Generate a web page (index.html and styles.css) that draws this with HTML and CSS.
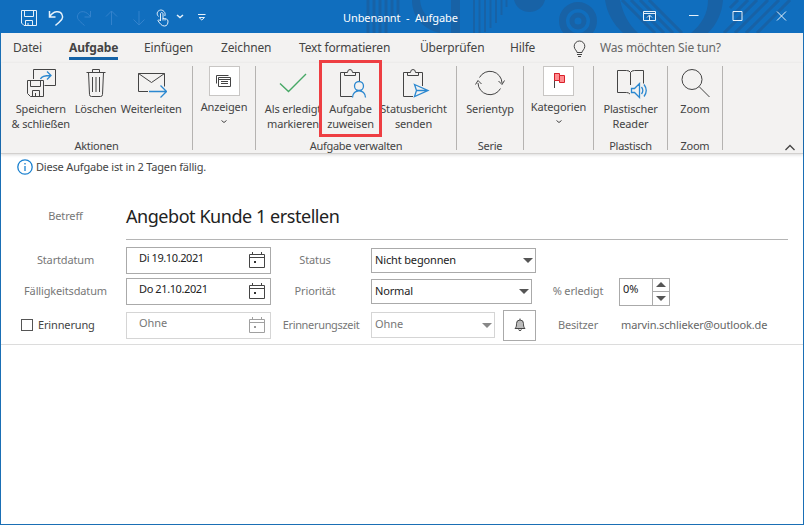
FILE: index.html
```html
<!DOCTYPE html>
<html lang="de">
<head>
    <meta charset="UTF-8">
    <meta name="viewport" content="width=device-width, initial-scale=1.0">
    <title>Unbenannt - Aufgabe</title>
    <link rel="stylesheet" href="styles.css">
</head>
<body>
    <div class="window">
        <header class="titlebar">
            <!-- Decorative pattern -->
            <svg class="pattern" width="444" height="33" viewBox="360 0 444 33">
                <path stroke-width="3" d="M368 0v33M374 0v33M380 0v33M386 0v33M392 0v21M398 0v19"/>
                <path class="solid" d="M412 0h8c1 12 8 20 20 23v10c-17-4-28-16-28-33zM451 0h9v33h-9zM514 0h31c-4 16-27 16-31 0z"/>
                <path stroke-width="2" d="M474 0v33M479.500 0v33M485 0v32M490.500 0v28M496 0v23M501.500 0v15M506.500 0v7"/>
                <circle cx="578" cy="21" r="15.500" stroke-width="7"/>
                <circle cx="578" cy="21" r="6" stroke-width="5"/>
                <path class="solid" d="M605 0h15c3 14 9 25 18 33h-15c-10-9-16-20-18-33zM708 0h15c-1 13-6 24-15 33h-17c11-9 17-20 17-33z"/>
                <path stroke-width="3" d="M622 0l33 33M631 0l33 33M640 0l33 33M649 0l33 33M730 8l8-8M733 15l15-15M724 33l33-33M735 33l33-33M746 33l33-33M757 33l33-33"/>
            </svg>
            <div class="quick">
                <svg width="28" height="18" viewBox="0 0 28 18"><path d="M7.500 1.500h15v15h-12.500l-2.500-2.500zM10.500 1.500v6h9v-6M11.500 16.500v-5h7v5M14 16v-2"/></svg>
                <svg width="28" height="18" viewBox="0 0 28 18" class="bold"><path d="M7.500 2v6h6M7.800 7.500C11 2 18 1 20 5.500c2 4-1 6-6.500 11"/></svg>
                <svg width="28" height="18" viewBox="0 0 28 18" class="dim"><path d="M20.500 2v6h-6M20.200 7.500C17 2 10 1 8 5.500c-2 4 1 6 6.500 11"/></svg>
                <svg width="28" height="18" viewBox="0 0 28 18" class="dim"><path d="M13.500 2v14M8 7.500L13.500 2 19 7.500"/></svg>
                <svg width="28" height="18" viewBox="0 0 28 18" class="dim"><path d="M13 2v14M7.500 10.500L13 16l5.500-5.500"/></svg>
                <svg width="18" height="18" viewBox="0 0 18 18"><path d="M6.500 12V5c0-2 2.500-2 2.500 0v4.500c2 0 5 .5 5 2.500 0 3-1 5-3.500 5-3 0-4-2-6.500-5.200 0-1.300 1.500-1.300 2.500.2M11 9.500v2M9 9v2.500M4.500 7.500c-4-4 2-9 5.500-5 1.300 1.300 1.300 3 .8 4.500"/></svg>
                <svg width="16" height="18" viewBox="0 0 16 18" class="bold"><path d="M5 6l3 2.500 3-2.500"/></svg>
                <svg width="28" height="18" viewBox="0 0 28 18"><path d="M10 5.500h7.500M11 8.500h5.500l-2.700 2.500z"/></svg>
            </div>
            <div class="caption">Unbenannt&nbsp; -&nbsp; Aufgabe</div>
            <div class="controls">
                <svg width="44" height="18" viewBox="0 0 44 18"><path d="M15.500 4.500h12v9h-12zM15.500 6.500h12M21.500 13V8.500M19 10.500l2.500-2.500 2.500 2.500"/></svg>
                <svg width="44" height="18" viewBox="0 0 44 18"><path d="M17 8.500h9.500"/></svg>
                <svg width="44" height="18" viewBox="0 0 44 18"><path d="M17 4.500h9v9h-9z"/></svg>
                <svg width="44" height="18" viewBox="0 0 44 18"><path d="M17 4.500l9 9M26 4.500l-9 9"/></svg>
            </div>
        </header>

        <nav class="tabs">
            <a class="tab">Datei</a>
            <a class="tab active">Aufgabe</a>
            <a class="tab">Einfügen</a>
            <a class="tab">Zeichnen</a>
            <a class="tab">Text formatieren</a>
            <a class="tab">Überprüfen</a>
            <a class="tab">Hilfe</a>
            <svg width="14" height="18" viewBox="0 0 14 18"><path d="M4 12.500c0-2-2.800-3-2.800-6.200a5.300 5.300 0 0 1 10.600 0c0 3.200-2.800 4.200-2.800 6.200zM4 14.500h5M5 16.500h3"/></svg>
            <a class="tab search">Was möchten Sie tun?</a>
        </nav>

        <section class="ribbon">
            <div class="group actions">
                <div class="tools">
                    <div class="tool save">
                        <svg width="32" height="32" viewBox="0 0 32 32"><path d="M8.500 12V2.500h22v16h-11M2.500 13.500h16v16h-13l-3-3zM5.500 13.500v6h10v-6M7.500 29.500v-6h7v6M10.500 29v-3"/><path class="blue" d="M15.500 12c1-3 4-3.500 10-3.500M22 4.500l4 4-4 4"/></svg>
                        <span>Speichern<br>&amp; schließen</span>
                    </div>
                    <div class="tool delete">
                        <svg width="32" height="32" viewBox="0 0 32 32"><path d="M6.500 5.500h19M12.500 5V2.500h7V5M8.500 5.500l1 22q0 2 2 2h9q2 0 2-2l1-22M12.500 10v15M16 10v15M19.500 10v15"/></svg>
                        <span>Löschen</span>
                    </div>
                    <div class="tool forward">
                        <svg width="32" height="32" viewBox="0 0 32 32"><path d="M13 24.500H3.500v-18h26v13M3.500 6.500l13 9 13-9"/><path class="blue" d="M14 24.500h17M25.500 18.500l6 6-6 6"/></svg>
                        <span>Weiterleiten</span>
                    </div>
                </div>
                <div class="name">Aktionen</div>
            </div>
            <div class="group show">
                <div class="tool boxed">
                    <div class="box"><svg width="28" height="28" viewBox="0 0 28 28"><path d="M6.500 16.500v-8h12M8.500 11v-.5h12v9h-12zM8.500 12.500h12M11 14.500h7M11 16.500h7"/></svg></div>
                    <span>Anzeigen</span>
                    <svg class="chevron" width="8" height="6" viewBox="0 0 8 6"><path d="M1.500 1.500l2.500 2 2.500-2"/></svg>
                </div>
            </div>
            <div class="group manage">
                <div class="tools">
                    <div class="tool done">
                        <svg width="32" height="32" viewBox="0 0 32 32"><path class="green" d="M3 16.500l8.500 8L29 7"/></svg>
                        <span>Als erledigt<br>markieren</span>
                    </div>
                    <div class="tool assign">
                        <svg width="32" height="32" viewBox="0 0 32 32"><path d="M11 5.500H5.500v24H17M19 5.500h5.500V14M9.500 8.500v-3h3q0-3 2.500-3t2.500 3h3v3z"/><path class="blue" d="M19.500 19a4.500 4.500 0 1 1 9 0 4.500 4.500 0 0 1-9 0zM17.500 30.500c0-9 13-9 13 0"/></svg>
                        <span>Aufgabe<br>zuweisen</span>
                    </div>
                    <div class="tool report">
                        <svg width="32" height="32" viewBox="0 0 32 32"><path d="M11 5.500H5.500v24H15M19 5.500h5.500V19M9.500 8.500v-3h3q0-3 2.500-3t2.500 3h3v3z"/><path class="blue" d="M16.500 17.500L30 23.500l-13.500 6 2-6zM18.500 23.500H29"/></svg>
                        <span>Statusbericht<br>senden</span>
                    </div>
                </div>
                <div class="name">Aufgabe verwalten</div>
            </div>
            <div class="group series">
                <div class="tool">
                    <svg width="32" height="32" viewBox="0 0 32 32"><path d="M5.500 10.500a12 12 0 0 1 22.500 5.500M26.500 21.500A12 12 0 0 1 4 16M1.500 17.500l2.500-4 3.500 3.500M24.500 14l3.500 3.500 2.500-4"/></svg>
                    <span>Serientyp</span>
                </div>
                <div class="name">Serie</div>
            </div>
            <div class="group categories">
                <div class="tool boxed">
                    <div class="box"><svg width="28" height="28" viewBox="0 0 28 28"><path d="M9.500 6v15"/><path class="flag" d="M9.500 6.500h5v2h5v7h-5v-2h-5zM14.500 8.500v5"/></svg></div>
                    <span>Kategorien</span>
                    <svg class="chevron" width="8" height="6" viewBox="0 0 8 6"><path d="M1.500 1.500l2.500 2 2.500-2"/></svg>
                </div>
            </div>
            <div class="group immersive">
                <div class="tool">
                    <svg width="32" height="32" viewBox="0 0 32 32"><path d="M15.500 18V5.500q-1-2-4-2H2.500v22h9q2 0 3.500 1.500M15.500 5.500q1-2 4-2h9v13"/><path class="blue" d="M16.500 21.500h3l5-5v14l-5-5h-3zM26.500 20c1.500 2 1.500 5 0 7M29 17.500c3 4 3 8 0 12"/></svg>
                    <span>Plastischer<br>Reader</span>
                </div>
                <div class="name">Plastisch</div>
            </div>
            <div class="group zoom">
                <div class="tool">
                    <svg width="32" height="32" viewBox="0 0 32 32"><circle cx="13" cy="12.500" r="10"/><path d="M20 19.500l10.500 10.500"/></svg>
                    <span>Zoom</span>
                </div>
                <div class="name">Zoom</div>
            </div>
            <svg class="collapse" width="12" height="8" viewBox="0 0 12 8"><path d="M1.500 6L6 1.500 10.500 6"/></svg>
        </section>

        <div class="info">
            <svg width="16" height="16" viewBox="0 0 16 16"><circle cx="8" cy="8" r="7.200"/><path d="M8 7v5M8 4v1.500"/></svg>
            <span>Diese Aufgabe ist in 2 Tagen fällig.</span>
        </div>

        <form class="task">
            <div class="subject">
                <label>Betreff</label>
                <div class="subject-text">Angebot Kunde 1 erstellen</div>
            </div>
            <div class="row">
                <label>Startdatum</label>
                <div class="date"><span>Di 19.10.2021</span><svg width="16" height="16" viewBox="0 0 16 16"><path d="M.5 2.500h15v13H.5zM.5 5.500h15M3.500 0v3M12.500 0v3"/><path class="dot" d="M5 9h2v2H5z"/></svg></div>
                <label class="second">Status</label>
                <div class="select status"><span>Nicht begonnen</span><i></i></div>
            </div>
            <div class="row">
                <label>Fälligkeitsdatum</label>
                <div class="date"><span>Do 21.10.2021</span><svg width="16" height="16" viewBox="0 0 16 16"><path d="M.5 2.500h15v13H.5zM.5 5.500h15M3.500 0v3M12.500 0v3"/><path class="dot" d="M5 9h2v2H5z"/></svg></div>
                <label class="second">Priorität</label>
                <div class="select priority"><span>Normal</span><i></i></div>
                <label class="percent">% erledigt</label>
                <div class="spinner">
                    <span>0%</span>
                    <div class="steps"><b><i class="up"></i></b><b><i></i></b></div>
                </div>
            </div>
            <div class="row reminder">
                <label class="check"><span class="checkbox"></span>Erinnerung</label>
                <div class="date disabled"><span>Ohne</span><svg width="16" height="16" viewBox="0 0 16 16"><path d="M.5 2.500h15v13H.5zM.5 5.500h15M3.500 0v3M12.500 0v3"/><path class="dot" d="M5 9h2v2H5z"/></svg></div>
                <label class="second wide">Erinnerungszeit</label>
                <div class="select time disabled"><span>Ohne</span><i></i></div>
                <div class="bell"><svg width="12" height="14" viewBox="0 0 12 14"><path d="M1 10.500c1.500-1.500 1.500-3 1.500-5a3.500 3.500 0 0 1 7 0c0 2 0 3.500 1.500 5zM6 .5V2M4.500 11.500c.5 1.500 2.500 1.500 3 0"/></svg></div>
                <label class="owner">Besitzer</label>
                <div class="mail">marvin.schlieker@outlook.de</div>
            </div>
        </form>
        <main class="notes"></main>
    </div>
</body>
</html>
```
FILE: styles.css
```css
* {
    box-sizing: border-box;
}
body {
    margin: 0;
    font-family: "Noto Sans", "Open Sans", sans-serif;
    font-size: 11px;
    letter-spacing: -0.15px;
    color: #444;
    background-color: #fff;
}
svg {
    display: block;
    flex: none;
    fill: none;
    stroke: #444;
}
.window {
    height: 525px;
    display: flex;
    flex-direction: column;
    border: 1px solid #1a6fb5;
    border-top: none;
    white-space: nowrap;
}

/* Title bar */
.titlebar {
    position: relative;
    height: 33px;
    margin: 0 -1px;
    display: grid;
    grid-template-columns: 343px 1fr 176px;
    align-items: center;
    background-color: #106ebe;
    color: #fff;
}
.pattern {
    position: absolute;
    top: 0;
    right: 0;
    stroke: #1862a6;
}
.solid {
    fill: #1862a6;
    stroke: none;
}
.quick, .controls {
    position: relative;
    display: flex;
}
.quick {
    padding: 2px 0 0 14px;
}
.quick svg, .controls svg {
    stroke: #e6f1fa;
}
.quick .bold {
    stroke-width: 1.5;
}
.quick svg.dim {
    stroke: #3382cc;
}
.caption {
    position: relative;
    padding-top: 2px;
    letter-spacing: -0.1px;
}
.controls {
    padding-bottom: 1px;
}

/* Tabs */
.tabs {
    height: 30px;
    display: grid;
    grid-template-columns: 56px 75px 77px 78px 121px 90px 63px 27px 1fr;
    padding-left: 12px;
    background-color: #f3f2f1;
    font-size: 12px;
}
.tabs svg {
    margin-top: 7px;
}
.tab {
    justify-self: start;
    height: 27px;
    line-height: 30px;
}
.tab.active {
    font-weight: bold;
    border-bottom: 3px solid #1664a8;
}
.search {
    color: #666;
}

/* Ribbon */
.ribbon {
    position: relative;
    height: 91px;
    display: flex;
    background-color: #f3f2f1;
    border-bottom: 1px solid #d2d0ce;
    box-shadow: 0 1px 3px rgba(0, 0, 0, 0.15);
    line-height: 15px;
    text-align: center;
}
.group {
    height: 84px;
    margin-top: 3px;
    display: flex;
    flex-direction: column;
    justify-content: space-between;
    border-right: 1px solid #b5b3b1;
}
.actions { width: 192px; }
.show { width: 63px; }
.manage { width: 201px; }
.series { width: 67px; }
.categories { width: 70px; }
.immersive { width: 74px; }
.zoom { width: 55px; }
.tools {
    display: flex;
}
.tool {
    display: flex;
    flex-direction: column;
    align-items: center;
    padding-top: 1px;
}
.tool > span {
    margin-top: 2px;
}
.save { width: 80px; }
.delete { width: 30px; }
.forward { width: 82px; }
.done { width: 63px; padding-left: 11px; }
.assign {
    position: relative;
    width: 63px;
    height: 77px;
    margin-top: -6px;
    padding-top: 4px;
    background-color: #f3f2f1;
    border: 3px solid #ee3e42;
}
.report { width: 63px; }
.box {
    width: 31px;
    height: 30px;
    display: flex;
    align-items: center;
    justify-content: center;
    background-color: #fff;
    border: 1px solid #c8c6c4;
}
.boxed {
    padding-top: 0;
}
.boxed > span {
    margin-top: 3px;
}
.chevron {
    margin-top: 5px;
}
.name {
    margin-bottom: -3px;
    letter-spacing: -0.28px;
}
.blue {
    stroke: #2b88d0;
    stroke-width: 1.3;
}
.green {
    stroke: #47a866;
    stroke-width: 1.4;
}
.flag {
    stroke: #d8202a;
    fill: #ff8d90;
}
.collapse {
    position: absolute;
    right: 7px;
    bottom: 1px;
    stroke-width: 1.3;
}

/* Info line */
.info {
    height: 26px;
    display: flex;
    align-items: center;
    gap: 3px;
    padding-left: 16px;
    letter-spacing: -0.18px;
}
.info svg {
    stroke: #1a80cf;
    stroke-width: 1.3;
}
.info span {
    margin-top: -1px;
}

/* Task form */
.task {
    height: 165px;
    border-bottom: 1px solid #dcdcdc;
    line-height: 16px;
}
.task label {
    width: 125px;
    padding: 0 0 1px 4px;
    text-align: center;
    color: #777;
}
.subject {
    height: 60px;
    margin-right: 15px;
    display: flex;
    align-items: center;
}
.subject label {
    margin-top: 12px;
}
.subject-text {
    flex: 1;
    height: 60px;
    padding-top: 12px;
    line-height: 48px;
    font-size: 18px;
    letter-spacing: -0.45px;
    color: #222;
    border-bottom: 1px solid #b5b5b5;
}
.row {
    height: 31px;
    display: flex;
    align-items: center;
}
.row:nth-child(2) {
    margin-top: 5px;
}
.row.reminder {
    height: 34px;
    margin-top: 1px;
}
.date {
    width: 145px;
    height: 27px;
    display: flex;
    justify-content: space-between;
    padding: 4px 5px 0 12px;
    border: 1px solid #aaa;
    color: #222;
    letter-spacing: -0.4px;
}
.date span, .select span {
    margin-top: -2px;
}
.dot {
    fill: #333;
    stroke: none;
}
.task label.second {
    width: 100px;
    padding: 0 12px 1px 0;
}
.task label.wide {
    padding-right: 0;
    letter-spacing: -0.33px;
}
.select {
    height: 25px;
    display: flex;
    align-items: center;
    justify-content: space-between;
    padding: 0 2px 0 3px;
    border: 1px solid #aaa;
    color: #222;
}
.select i, .steps i {
    border: 5px solid transparent;
    border-top-color: #555;
    border-bottom: none;
}
.status { width: 165px; }
.priority { width: 161px; }
.time { width: 124px; height: 26px; }
.disabled {
    color: #777;
    border-color: #d5d5d5;
    letter-spacing: -0.1px;
}
.disabled svg {
    opacity: 0.5;
}
.disabled i {
    border-top-color: #888;
}
.task label.percent {
    width: 87px;
    padding-left: 5px;
}
.spinner {
    width: 51px;
    height: 28px;
    display: flex;
    justify-content: space-between;
    padding-left: 3px;
    line-height: 20px;
    border: 1px solid #aaa;
    color: #222;
}
.steps {
    width: 17px;
    display: grid;
    grid-template-rows: 1fr 1fr;
    border-left: 1px solid #aaa;
}
.steps b {
    display: flex;
    align-items: center;
    justify-content: center;
}
.steps b:first-child {
    border-bottom: 1px solid #aaa;
}
.steps .up {
    transform: rotate(180deg);
}
.task label.check {
    display: flex;
    align-items: center;
    gap: 5px;
    padding-left: 20px;
    color: #444;
}
.checkbox {
    width: 12px;
    height: 12px;
    border: 1px solid #555;
}
.bell {
    width: 33px;
    height: 31px;
    margin-left: 8px;
    display: flex;
    align-items: center;
    justify-content: center;
    border: 1px solid #aaa;
}
.bell svg {
    fill: #bbb;
}
.task label.owner {
    width: 84px;
    padding: 0 0 1px;
}
.mail {
    margin-left: 1px;
    padding-bottom: 1px;
    color: #666;
}
.notes {
    flex: 1;
}
```
